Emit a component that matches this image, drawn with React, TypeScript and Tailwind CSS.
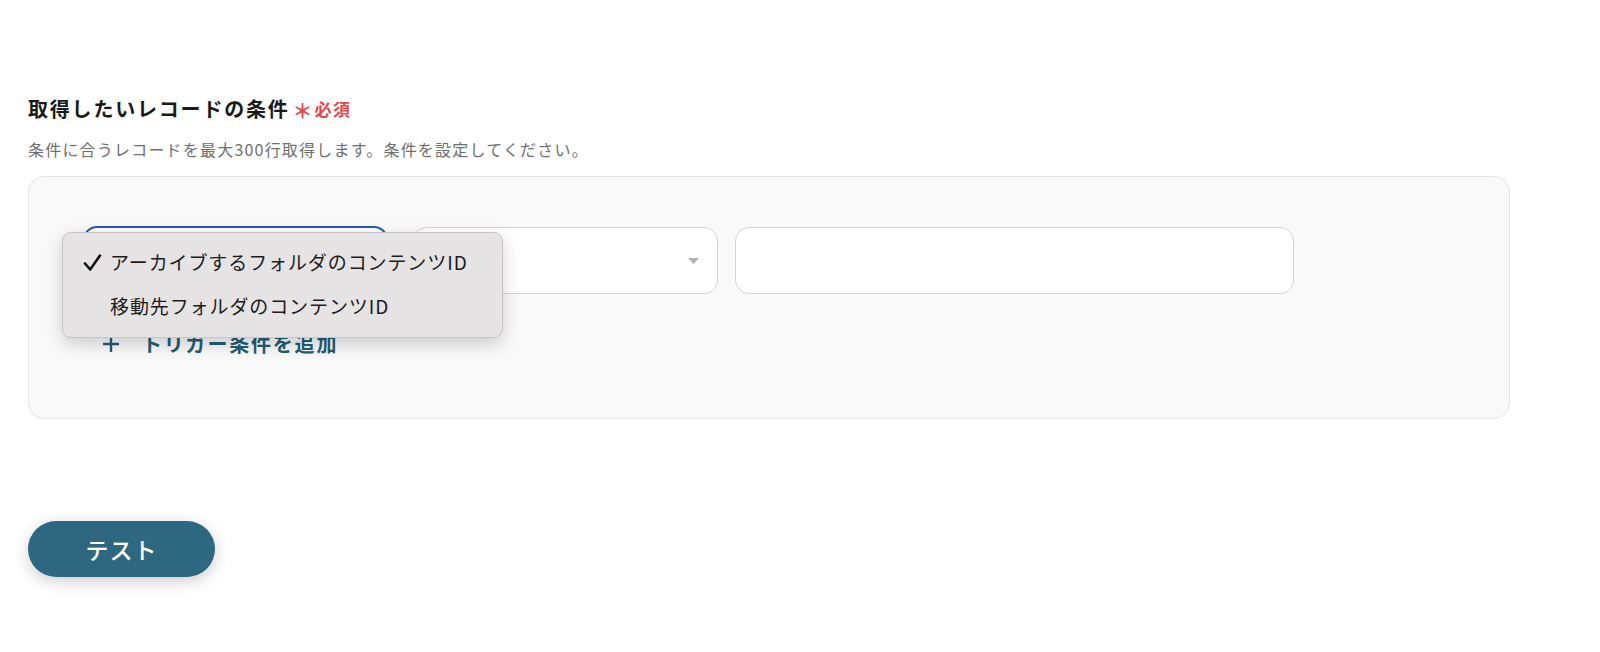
import React from "react";

export default function App() {
  return (
    <div
      className="w-full h-[652px] bg-white pl-[28px] pt-[95px] overflow-hidden"
      style={{ fontFamily: '"Noto Sans CJK JP", "Noto Sans", sans-serif' }}
    >
      <div className="flex items-center h-[28px]">
        <span className="text-[20px] leading-[28px] font-bold text-[#1a1a1a] tracking-[1.8px]">
          取得したいレコードの条件
        </span>
        <span className="ml-[3px] text-[20px] leading-[28px] text-[#e5484d] font-bold mt-[4px]">＊</span>
        <span className="ml-[2px] text-[17px] leading-[28px] text-[#e5484d] font-bold tracking-[1.5px]">必須</span>
      </div>
      <div className="mt-[14px] text-[16px] leading-[24px] text-[#707070] tracking-[1.2px]">
        条件に合うレコードを最大300行取得します。条件を設定してください。
      </div>
      <div className="relative mt-[15px] w-[1482px] h-[243px] rounded-[16px] border border-[#e4e4e8] bg-[#f9f9f9] pt-[50px] pl-[54px]">
        <div className="flex items-start">
          <div className="w-[305px] h-[68px] rounded-[14px] border-2 border-[#2559c9] bg-white -mt-[1px]" />
          <div className="ml-[25px] w-[305px] h-[67px] rounded-[14px] border border-[#d4d4d4] bg-white flex items-center justify-end pr-[18px]">
            <svg width="11" height="6" viewBox="0 0 11 6">
              <path d="M0 0 L11 0 L5.5 6 Z" fill="#b3b3b3" />
            </svg>
          </div>
          <div className="ml-[17px] w-[559px] h-[67px] rounded-[14px] border border-[#d4d4d4] bg-white" />
        </div>
        <div className="mt-[36px] ml-[19px] flex items-center h-[28px] text-[#235d74]">
          <svg width="18" height="18" viewBox="0 0 18 18">
            <path d="M9 1 V17 M1 9 H17" stroke="#235d74" strokeWidth="2.4" />
          </svg>
          <span className="ml-[22px] text-[20px] leading-[28px] font-bold tracking-[1.8px]">トリガー条件を追加</span>
        </div>
        <div className="absolute left-[33px] top-[55px] w-[441px] h-[106px] rounded-[9px] border border-[#c6c4c4] bg-[#e5e3e3] shadow-[0_6px_18px_rgba(0,0,0,0.18)] pt-[13px] text-[#1c1c1c]">
          <div className="flex items-center h-[32px]">
            <svg className="ml-[20px]" width="19" height="19" viewBox="0 0 19 19">
              <path d="M2 10.5 L7.2 16.5 L17 2.5" stroke="#111" strokeWidth="2.6" fill="none" strokeLinecap="round" strokeLinejoin="round" />
            </svg>
            <span className="ml-[8px] text-[19px] leading-[32px] tracking-[0.9px]">アーカイブするフォルダのコンテンツID</span>
          </div>
          <div className="flex items-center h-[32px] mt-[12px] pl-[47px]">
            <span className="text-[19px] leading-[32px] tracking-[0.9px]">移動先フォルダのコンテンツID</span>
          </div>
        </div>
      </div>
      <button className="mt-[102px] w-[187px] h-[56px] rounded-full bg-[#2d6880] text-white text-[23px] font-medium tracking-[1px] shadow-[0_4px_16px_rgba(0,0,0,0.2)] flex items-center justify-center">
        テスト
      </button>
    </div>
  );
}
